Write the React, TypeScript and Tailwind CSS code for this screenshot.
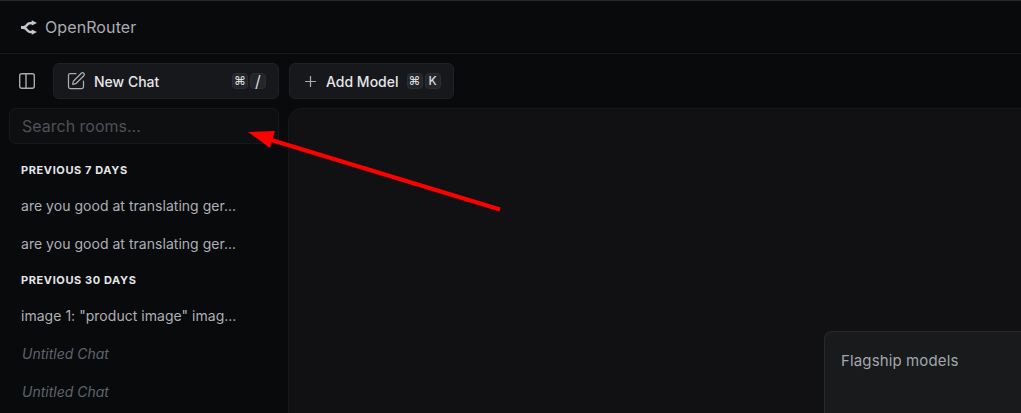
import { SquarePen, Plus } from "lucide-react";

function Kbd({ children, large }: { children: string; large?: boolean }) {
  return (
    <span
      className={
        large
          ? "flex h-[16px] w-[16px] items-center justify-center rounded-[4px] border border-[#2b2d31] bg-[#232529] text-[16px] leading-none text-[#d8dade]"
          : "flex h-[16px] w-[16px] items-center justify-center rounded-[4px] border border-[#2b2d31] bg-[#232529] text-[12px] font-medium leading-none text-[#d8dade]"
      }
    >
      {children}
    </span>
  );
}

function Logo() {
  return (
    <svg width="17" height="17" viewBox="0 0 512 512" fill="#c4c7cc" stroke="#c4c7cc">
      <path d="M30 256c40 0 96-8 130-26 40-22 56-72 110-96 34-14 70-16 98-16" fill="none" strokeWidth="76" />
      <path d="M30 256c40 0 96 8 130 26 40 22 56 72 110 96 34 14 70 16 98 16" fill="none" strokeWidth="76" />
      <path d="M512 118 354 40v156z" stroke="none" />
      <path d="M512 394 354 316v156z" stroke="none" />
    </svg>
  );
}

function PanelIcon() {
  return (
    <svg width="16" height="16" viewBox="0 0 16 16" fill="none" stroke="#a8abb0" strokeWidth="1.4">
      <rect x="0.7" y="0.7" width="14.6" height="14.6" rx="2" />
      <line x1="7" y1="0.7" x2="7" y2="15.3" />
    </svg>
  );
}

function Chat({ children, muted }: { children: string; muted?: boolean }) {
  return (
    <div
      className={
        muted
          ? "flex h-[38px] items-center px-[22px] text-[14px] italic text-[#5f636b]"
          : "flex h-[38px] items-center px-[21px] text-[14px] tracking-[0.03px] text-[#adb0b6]"
      }
    >
      {children}
    </div>
  );
}

function Heading({ children, spaced }: { children: string; spaced?: boolean }) {
  return (
    <div
      className={
        spaced
          ? "mb-[3px] mt-[5px] flex h-[26px] items-center px-[21px] text-[11px] font-bold tracking-[0.6px] text-[#e4e6e9]"
          : "mb-[3px] flex h-[26px] items-center px-[21px] text-[11px] font-bold tracking-[0.6px] text-[#e4e6e9]"
      }
    >
      {children}
    </div>
  );
}

export default function App() {
  return (
    <div
      className="relative flex h-[413px] w-[1021px] flex-col overflow-hidden bg-[#090a0c]"
      style={{ fontFamily: "Inter, 'Noto Sans', sans-serif" }}
    >
      <header className="flex h-[54px] shrink-0 items-center gap-[8px] border-b border-t border-b-[#17181b] border-t-[#26272a] pl-[20px]">
        <Logo />
        <span className="text-[16px] tracking-[0.1px] text-[#a9adb4]">OpenRouter</span>
      </header>

      <div className="flex h-[54px] shrink-0 items-center">
        <div className="flex w-[53px] pl-[19px]">
          <PanelIcon />
        </div>
        <button className="flex h-[36px] w-[226px] items-center rounded-[6px] border border-[#1f2125] bg-[#17181b] pl-[12px] pr-[12px]">
          <SquarePen size={20} strokeWidth={1.5} className="text-[#a9acb2]" />
          <span className="ml-[8px] text-[14px] font-medium text-[#e4e6e9]">New Chat</span>
          <span className="ml-auto flex gap-[2px]">
            <Kbd>⌘</Kbd>
            <Kbd large>/</Kbd>
          </span>
        </button>
        <button className="ml-[10px] flex h-[36px] w-[165px] items-center rounded-[6px] border border-[#1f2125] bg-[#17181b] pl-[12px]">
          <Plus size={17} strokeWidth={1.75} className="text-[#a9acb2]" />
          <span className="ml-[7px] text-[14px] font-medium text-[#e4e6e9]">Add Model</span>
          <span className="ml-[8px] flex gap-[2px]">
            <Kbd>⌘</Kbd>
            <Kbd>K</Kbd>
          </span>
        </button>
      </div>

      <div className="flex min-h-0 flex-1">
        <aside className="w-[288px] shrink-0">
          <div className="ml-[9px] flex h-[36px] w-[270px] items-center rounded-[6px] border border-[#17181b] bg-[#0e0f11] pl-[12px] text-[16px] text-[#4e5157]">
            Search rooms...
          </div>
          <div className="pt-[13px]">
            <Heading>PREVIOUS 7 DAYS</Heading>
            <Chat>are you good at translating ger...</Chat>
            <Chat>are you good at translating ger...</Chat>
            <Heading spaced>PREVIOUS 30 DAYS</Heading>
            <Chat>image 1: "product image" imag...</Chat>
            <Chat muted>Untitled Chat</Chat>
            <Chat muted>Untitled Chat</Chat>
          </div>
        </aside>
        <main className="flex-1 rounded-tl-[14px] border-l border-t border-[#17181b] bg-[#111113] pl-[535px] pt-[222px]">
          <div className="h-[200px] w-[300px] rounded-tl-[8px] border-l border-t border-[#27292c] bg-[#191a1c] pl-[16px] pt-[19px] text-[15px] leading-[20px] tracking-[0.13px] text-[#a3a6ac]">
            Flagship models
          </div>
        </main>
      </div>

      <svg className="pointer-events-none absolute left-0 top-0" width="1021" height="413">
        <line x1="500" y1="209.5" x2="268" y2="139" stroke="#ff0000" strokeWidth="4" />
        <path d="M248 132 L275 131 L270 148 Z" fill="#ff0000" />
      </svg>
    </div>
  );
}
